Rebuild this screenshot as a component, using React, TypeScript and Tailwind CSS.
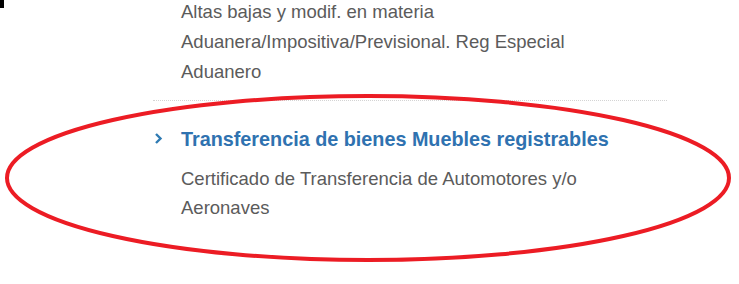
import React from 'react';

const items = [
  {
    title: '',
    lines: ['Altas bajas y modif. en materia', 'Aduanera/Impositiva/Previsional. Reg Especial', 'Aduanero'],
  },
];

export default function App() {
  return (
    <div className="relative w-[739px] h-[284px] bg-white overflow-hidden" style={{ fontFamily: '"Liberation Sans", Arial, sans-serif' }}>
      <div className="absolute left-0 top-0 w-[4px] h-[8px] bg-black" />
      <div className="ml-[153px] w-[514px] -mt-[3px]">
        <div className="pl-[28px] pb-[13px] border-b border-dotted border-[#d4d4d4]">
          {items[0].lines.map((l) => (
            <div key={l} className="text-[18.5px] leading-[30px] text-[#5b5b5b]">{l}</div>
          ))}
        </div>
        <div className="pt-[25px] flex">
          <div className="w-[28px] pt-[6px] text-[#2f7bb3]">
            <svg width="10" height="13" viewBox="0 0 10 13" className="ml-[1px]">
              <path d="M2 2 L6.5 6.5 L2 11" fill="none" stroke="currentColor" strokeWidth="2.4" />
            </svg>
          </div>
          <div>
            <div className="text-[19.8px] leading-[26px] font-bold text-[#2f72b0]">Transferencia de bienes Muebles registrables</div>
            <div className="mt-[12px] text-[18.5px] leading-[29px] text-[#5b5b5b]">
              Certificado de Transferencia de Automotores y/o
              <br />
              Aeronaves
            </div>
          </div>
        </div>
      </div>
      <svg className="absolute left-0 top-0" width="739" height="284" viewBox="0 0 739 284">
        <ellipse cx="368" cy="178" rx="361" ry="82" fill="none" stroke="#ec1c24" strokeWidth="4" />
      </svg>
    </div>
  );
}
